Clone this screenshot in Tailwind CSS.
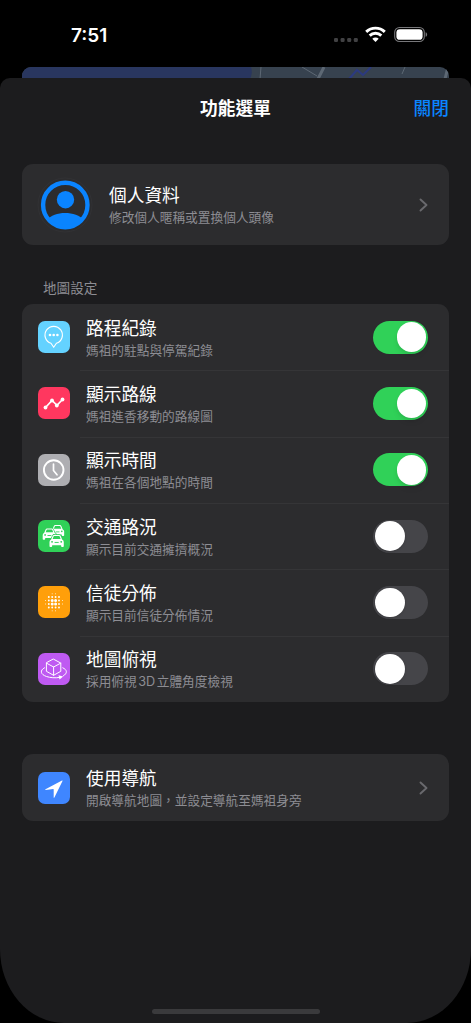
<!DOCTYPE html>
<html lang="zh-Hant">

<head>
    <meta charset="UTF-8">
    <meta name="viewport" content="width=device-width, initial-scale=1.0">
    <title>功能選單</title>
    <script src="https://cdn.jsdelivr.net/npm/@tailwindcss/browser@4"></script>
</head>

<body class="bg-black h-[1023px] overflow-hidden flex flex-col text-white font-['Inter','Noto_Sans_CJK_TC',sans-serif]">
    <!-- Status bar -->
    <div class="h-[66px] shrink-0 flex items-start justify-between pl-[71px] pr-[43px]">
        <div class="mt-[22px] text-[19px] leading-7 font-semibold">7:51</div>
        <svg class="mt-[26px]" width="94" height="17" viewBox="0 0 94 17">
            <g fill="#414143">
                <rect x="0" y="12" width="4" height="4" rx="1.2" />
                <rect x="6.6" y="12" width="4" height="4" rx="1.2" />
                <rect x="13.2" y="12" width="4" height="4" rx="1.2" />
                <rect x="19.8" y="12" width="4" height="4" rx="1.2" />
            </g>
            <g fill="none" stroke="#fff" stroke-width="2.9">
                <path d="M32.2 5.9a13.4 13.4 0 0 1 18.6 0" />
                <path d="M35.7 9.6a8.3 8.3 0 0 1 11.6 0" />
            </g>
            <path d="M38.3 12.7a4.6 4.6 0 0 1 6.4 0l-3.2 3.2z" fill="#fff" />
            <rect x="60.7" y="1.5" width="29.6" height="14" rx="4.8" fill="none" stroke="#77777a" stroke-width="1.1" />
            <rect x="62.4" y="3.2" width="26.2" height="10.6" rx="3.4" fill="#fff" />
            <path d="M91.6 6.2c2 .6 2 4 0 4.6z" fill="#77777a" />
        </svg>
    </div>

    <!-- Map behind the sheet -->
    <div class="h-3 shrink-0 mx-[22px] mt-px -mb-px rounded-t-[9px] overflow-hidden bg-[#37424f]">
        <svg width="427" height="12" viewBox="0 0 427 12">
            <path d="M0 0h229q2 6-1 12H0z" fill="#29365f" />
            <path d="M239 0l-1 12M280 0l15 9M383 0l-3 7" fill="none" stroke="#5d6874" stroke-width="1" />
            <path d="M302 0l-6 12M426 0l-3 12" fill="none" stroke="#5d6874" stroke-width="3" />
            <path d="M327 12l8-9 6 5 8-8" fill="none" stroke="#2c3a80" stroke-width="2" />
        </svg>
    </div>

    <!-- Sheet -->
    <main class="relative flex-1 bg-[#1c1c1e] rounded-t-[10px] rounded-b-[64px_74px] px-[22px] flex flex-col">
        <header class="h-[60px] pt-[2px] shrink-0 grid grid-cols-[1fr_auto_1fr] items-center text-[17.7px]">
            <h1 class="col-start-2 font-bold">功能選單</h1>
            <button class="justify-self-end font-medium text-[#0a84ff]">關閉</button>
        </header>

        <!-- Profile -->
        <section class="mt-[26px] h-[81px] shrink-0 bg-[#2c2c2e] rounded-[11px] flex items-center pl-[15px] pr-[21px]">
            <svg class="shrink-0" width="56" height="56" viewBox="0 0 56 56">
                <circle cx="28" cy="28" r="27" fill="none" stroke="#343436" stroke-width=".7" />
                <clipPath id="face"><circle cx="28.3" cy="28" r="23" /></clipPath>
                <g fill="#0a84ff" clip-path="url(#face)">
                    <circle cx="28.5" cy="22.7" r="8.7" />
                    <path d="M10 43c7-9.5 29-9.5 37 0v12H10z" />
                </g>
                <circle cx="28.3" cy="28" r="22.2" fill="none" stroke="#0a84ff" stroke-width="4.4" />
            </svg>
            <div class="flex-1 ml-4 pt-[3px]">
                <div class="text-[17.7px] leading-6">個人資料</div>
                <div class="text-[12.7px] leading-5 text-[#8d8d93]">修改個人暱稱或置換個人頭像</div>
            </div>
            <svg width="9" height="14" viewBox="0 0 9 14" fill="none" stroke="#69696d" stroke-width="1.9" stroke-linecap="round" stroke-linejoin="round"><path d="M1.5 1.5L7.5 7l-6 5.5" /></svg>
        </section>

        <!-- Map settings -->
        <h2 class="mt-[33px] ml-[21px] text-[13.6px] leading-[20px] text-[#8d8d93]">地圖設定</h2>
        <section class="mt-[6px] h-[398px] shrink-0 bg-[#2c2c2e] rounded-[11px] grid grid-rows-6 pl-4">
            <div class="flex items-center">
                <svg class="shrink-0" width="32" height="32" viewBox="0 0 32 32">
                    <rect width="32" height="32" rx="7" fill="#64d2ff" />
                    <path d="M13 22.3a8.7 8.7 0 1 1 5.4 0L15.7 26.3z" fill="none" stroke="#fff" stroke-width="1.1" stroke-linejoin="round" />
                    <g fill="#fff"><circle cx="12" cy="14" r="1.3" /><circle cx="15.7" cy="14" r="1.3" /><circle cx="19.4" cy="14" r="1.3" /></g>
                </svg>
                <div class="ml-[10px] pl-[6px] pr-[21px] self-stretch flex-1 flex items-center justify-between shadow-[0_1px_0_#353537]">
                    <div class="pt-[3px]">
                        <div class="text-[17.7px] leading-6">路程紀錄</div>
                        <div class="text-[12.7px] leading-5 text-[#8d8d93]">媽祖的駐點與停駕紀錄</div>
                    </div>
                    <div class="w-[55px] h-[33px] rounded-full bg-[#30d158] p-[2px] flex items-center justify-end"><div class="size-[29.5px] rounded-full bg-white shadow-md"></div></div>
                </div>
            </div>
            <div class="flex items-center">
                <svg class="shrink-0" width="32" height="32" viewBox="0 0 32 32">
                    <rect width="32" height="32" rx="7" fill="#ff375f" />
                    <path d="M7.5 20.5l6.5-7 5 4.8L24.500 12.500" fill="none" stroke="#fff" stroke-width="1.7" />
                    <g fill="#fff"><circle cx="7.5" cy="20.5" r="1.9" /><circle cx="14" cy="13.5" r="1.9" /><circle cx="18.8" cy="18.5" r="1.9" /><circle cx="24.5" cy="12.5" r="1.9" /></g>
                </svg>
                <div class="ml-[10px] pl-[6px] pr-[21px] self-stretch flex-1 flex items-center justify-between shadow-[0_1px_0_#353537]">
                    <div class="pt-[3px]">
                        <div class="text-[17.7px] leading-6">顯示路線</div>
                        <div class="text-[12.7px] leading-5 text-[#8d8d93]">媽祖進香移動的路線圖</div>
                    </div>
                    <div class="w-[55px] h-[33px] rounded-full bg-[#30d158] p-[2px] flex items-center justify-end"><div class="size-[29.5px] rounded-full bg-white shadow-md"></div></div>
                </div>
            </div>
            <div class="flex items-center">
                <svg class="shrink-0" width="32" height="32" viewBox="0 0 32 32">
                    <rect width="32" height="32" rx="7" fill="#aeaeb2" />
                    <g fill="none" stroke="#fff" stroke-width="1.9" stroke-linecap="round" stroke-linejoin="round">
                        <circle cx="15.7" cy="16" r="9.8" />
                        <path d="M15.5 10v6.500l3.500 4.300" stroke-width="1.7" />
                    </g>
                </svg>
                <div class="ml-[10px] pl-[6px] pr-[21px] self-stretch flex-1 flex items-center justify-between shadow-[0_1px_0_#353537]">
                    <div class="pt-[3px]">
                        <div class="text-[17.7px] leading-6">顯示時間</div>
                        <div class="text-[12.7px] leading-5 text-[#8d8d93]">媽祖在各個地點的時間</div>
                    </div>
                    <div class="w-[55px] h-[33px] rounded-full bg-[#30d158] p-[2px] flex items-center justify-end"><div class="size-[29.5px] rounded-full bg-white shadow-md"></div></div>
                </div>
            </div>
            <div class="flex items-center">
                <svg class="shrink-0" width="32" height="32" viewBox="0 0 32 32">
                    <defs>
                        <g id="car">
                            <path d="M1.600 4.400L2.900 1.200Q3.300 0 4.600 0h4.800q1.300 0 1.700 1.200l1.300 3.200q1.600.8 1.600 2.400v4.200q0 .8-.8.8h-1q-.8 0-.8-.8v-1H2.600v1q0 .8-.8.8h-1q-.8 0-.8-.8V6.800Q0 5.200 1.600 4.400z" fill="#fff" stroke="#30d158" stroke-width="1.400" paint-order="stroke" />
                            <path d="M3.100 4l.9-2.500q.1-.4.500-.4h5q.4 0 .5.400l.9 2.500z" fill="#30d158" />
                            <path d="M5 7.300h4" stroke="#30d158" stroke-width=".9" />
                            <circle cx="2.500" cy="6.700" r=".9" fill="#30d158" /><circle cx="11.500" cy="6.700" r=".9" fill="#30d158" />
                        </g>
                    </defs>
                    <rect width="32" height="32" rx="7" fill="#30d158" />
                    <g transform="translate(13 5) scale(.94)"><use href="#car" /></g>
                    <g transform="translate(4.700 8.500) scale(.96)"><use href="#car" /></g>
                    <g transform="translate(11.500 15) scale(1.020)"><use href="#car" /></g>
                </svg>
                <div class="ml-[10px] pl-[6px] pr-[21px] self-stretch flex-1 flex items-center justify-between shadow-[0_1px_0_#353537]">
                    <div class="pt-[3px]">
                        <div class="text-[17.7px] leading-6">交通路況</div>
                        <div class="text-[12.7px] leading-5 text-[#8d8d93]">顯示目前交通擁擠概況</div>
                    </div>
                    <div class="w-[55px] h-[33px] rounded-full bg-[#454549] p-[2px] flex items-center"><div class="size-[29.5px] rounded-full bg-white shadow-sm"></div></div>
                </div>
            </div>
            <div class="flex items-center">
                <svg class="shrink-0" width="32" height="32" viewBox="0 0 32 32">
                    <rect width="32" height="32" rx="7" fill="#ff9f0a" />
                    <g fill="none" stroke="#fff" stroke-linecap="round">
                        <path d="M14.2 7.800h0M17.600 7.800h0M14.200 24.800h0M17.600 24.800h0M7.600 14.500h0M7.600 18h0M24.400 14.500h0M24.400 18h0" stroke-width=".9" />
                        <path d="M10.800 11h0M14.200 11h0M17.600 11h0M21 11h0M10.800 14.500h0M21 14.500h0M10.800 18h0M21 18h0M10.800 21.500h0M14.200 21.500h0M17.600 21.500h0M21 21.500h0" stroke-width="1.9" />
                        <path d="M14.200 14.500h0M17.600 14.500h0M14.200 18h0M17.600 18h0" stroke-width="3" />
                    </g>
                </svg>
                <div class="ml-[10px] pl-[6px] pr-[21px] self-stretch flex-1 flex items-center justify-between shadow-[0_1px_0_#353537]">
                    <div class="pt-[3px]">
                        <div class="text-[17.7px] leading-6">信徒分佈</div>
                        <div class="text-[12.7px] leading-5 text-[#8d8d93]">顯示目前信徒分佈情況</div>
                    </div>
                    <div class="w-[55px] h-[33px] rounded-full bg-[#454549] p-[2px] flex items-center"><div class="size-[29.5px] rounded-full bg-white shadow-sm"></div></div>
                </div>
            </div>
            <div class="flex items-center">
                <svg class="shrink-0" width="32" height="32" viewBox="0 0 32 32">
                    <rect width="32" height="32" rx="7" fill="#bf5af2" />
                    <g fill="none" stroke="#fff" stroke-width="1" stroke-linecap="round" stroke-linejoin="round">
                        <path d="M15.6 6.200l7.200 3.900v8.200l-7.200 4-7.200-4v-8.200zM8.400 10.100l7.200 3.900 7.200-3.900M15.600 14v8.300" />
                        <path d="M6.500 14.800c-5 2.600-4 6.600 2 8.700 4 1.300 8.500 1.700 13 .9M24.800 14.800c4.700 2 4.800 5.500.6 8" />
                    </g>
                    <path d="M20.500 22.200l4.700 1.400-3.700 3z" fill="#fff" />
                </svg>
                <div class="ml-[10px] pl-[6px] pr-[21px] self-stretch flex-1 flex items-center justify-between">
                    <div class="pt-[3px]">
                        <div class="text-[17.7px] leading-6">地圖俯視</div>
                        <div class="text-[12.7px] leading-5 text-[#8d8d93]">採用俯視<span class="mx-[1.5px]">3D</span>立體角度檢視</div>
                    </div>
                    <div class="w-[55px] h-[33px] rounded-full bg-[#454549] p-[2px] flex items-center"><div class="size-[29.5px] rounded-full bg-white shadow-sm"></div></div>
                </div>
            </div>
        </section>

        <!-- Navigation -->
        <section class="mt-[52px] h-[67px] shrink-0 bg-[#2c2c2e] rounded-[11px] flex items-center pl-4 pr-[21px]">
            <svg class="shrink-0" width="32" height="32" viewBox="0 0 32 32">
                <rect width="32" height="32" rx="7" fill="#3f86ff" />
                <path d="M7.5 17.200L24 8.600q.8-.3.500.5L16.400 25.500q-.6 1-.7-.2V17.500q0-.4-.4-.4L7.600 18q-.8-.3-.1-.8z" fill="#fff" />
            </svg>
            <div class="flex-1 ml-4 pt-[3px]">
                <div class="text-[17.7px] leading-6">使用導航</div>
                <div class="text-[12.7px] leading-5 text-[#8d8d93]">開啟導航地圖，並設定導航至媽祖身旁</div>
            </div>
            <svg width="9" height="14" viewBox="0 0 9 14" fill="none" stroke="#69696d" stroke-width="1.9" stroke-linecap="round" stroke-linejoin="round"><path d="M1.5 1.5L7.5 7l-6 5.5" /></svg>
        </section>

        <!-- Home indicator -->
        <div class="mt-auto mb-[9px] w-[168px] h-[5px] rounded-full bg-[#3a3a3c] self-center"></div>
    </main>
</body>

</html>
